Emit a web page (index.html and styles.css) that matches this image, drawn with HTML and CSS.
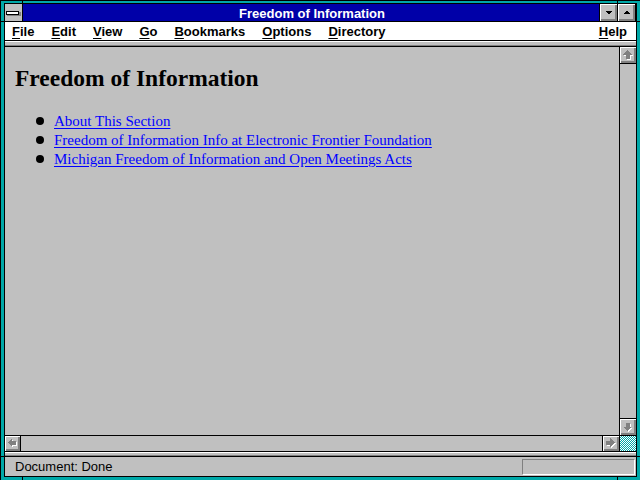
FILE: index.html
```html
<!DOCTYPE html>
<html>
<head>
<meta charset="utf-8">
<title>Freedom of Information</title>
<link rel="stylesheet" href="styles.css">
</head>
<body>
<div class="window">
  <div class="frame">
    <div class="inner">
      <div class="titlebar">
        <div class="sysmenu">
          <svg width="17" height="17" viewBox="0 0 17 17" shape-rendering="crispEdges">
            <rect x="2" y="8" width="14" height="4" fill="#808080"/>
            <rect x="1" y="7" width="13" height="4" fill="#000"/>
            <rect x="2" y="8" width="11" height="2" fill="#fff"/>
          </svg>
        </div>
        <div class="title">Freedom of Information</div>
        <div class="tbtn">
          <svg width="17" height="17" viewBox="0 0 17 17" shape-rendering="crispEdges">
            <polygon points="5,7 12,7 8.5,10.5" fill="#000"/>
          </svg>
        </div>
        <div class="tbtn last">
          <svg width="17" height="17" viewBox="0 0 17 17" shape-rendering="crispEdges">
            <polygon points="5,10 12,10 8.5,6.5" fill="#000"/>
          </svg>
        </div>
      </div>
      <div class="menubar">
        <span class="mi"><u>F</u>ile</span>
        <span class="mi"><u>E</u>dit</span>
        <span class="mi"><u>V</u>iew</span>
        <span class="mi"><u>G</u>o</span>
        <span class="mi"><u>B</u>ookmarks</span>
        <span class="mi"><u>O</u>ptions</span>
        <span class="mi"><u>D</u>irectory</span>
        <span class="spacer"></span>
        <span class="mi help"><u>H</u>elp</span>
      </div>
      <div class="sep"></div>
      <div class="main">
        <div class="view">
          <div class="page">
            <h1 class="heading">Freedom of Information</h1>
            <ul class="links">
              <li><a href="#">About This Section</a></li>
              <li><a href="#">Freedom of Information Info at Electronic Frontier Foundation</a></li>
              <li><a href="#">Michigan Freedom of Information and Open Meetings Acts</a></li>
            </ul>
          </div>
          <div class="vscroll">
            <div class="sbtn vbtn top">
              <svg width="15" height="15" viewBox="0 0 15 15" shape-rendering="crispEdges">
                <g transform="translate(1,1)"><polygon points="7.5,3 12,7.5 9.5,7.5 9.5,11.5 5.5,11.5 5.5,7.5 3,7.5" fill="#fff"/></g>
                <polygon points="7.5,3 12,7.5 9.5,7.5 9.5,11.5 5.5,11.5 5.5,7.5 3,7.5" fill="#808080"/>
              </svg>
            </div>
            <div class="track"></div>
            <div class="sbtn vbtn bottom">
              <svg width="15" height="15" viewBox="0 0 15 15" shape-rendering="crispEdges">
                <g transform="translate(1,1)"><polygon points="7.5,12 12,7.5 9.5,7.5 9.5,3.5 5.5,3.5 5.5,7.5 3,7.5" fill="#fff"/></g>
                <polygon points="7.5,12 12,7.5 9.5,7.5 9.5,3.5 5.5,3.5 5.5,7.5 3,7.5" fill="#808080"/>
              </svg>
            </div>
          </div>
        </div>
        <div class="hscroll">
          <div class="sbtn hbtn left">
            <svg width="14" height="14" viewBox="0 0 14 14" shape-rendering="crispEdges">
              <g transform="translate(1,1)"><polygon points="2.5,6.5 7,2 7,4.5 11,4.5 11,8.5 7,8.5 7,11" fill="#fff"/></g>
              <polygon points="2.5,6.5 7,2 7,4.5 11,4.5 11,8.5 7,8.5 7,11" fill="#808080"/>
            </svg>
          </div>
          <div class="track"></div>
          <div class="sbtn hbtn right">
            <svg width="15" height="14" viewBox="0 0 15 14" shape-rendering="crispEdges">
              <g transform="translate(1,1)"><polygon points="11.5,6.5 7,2 7,4.5 3,4.5 3,8.5 7,8.5 7,11" fill="#fff"/></g>
              <polygon points="11.5,6.5 7,2 7,4.5 3,4.5 3,8.5 7,8.5 7,11" fill="#808080"/>
            </svg>
          </div>
          <div class="corner"></div>
        </div>
      </div>
      <div class="sep2"></div>
      <div class="status">
        <span class="status-text">Document: Done</span>
        <span class="status-box"></span>
      </div>
    </div>
  </div>
  <div class="notch v n-tl"></div>
  <div class="notch v n-tr"></div>
  <div class="notch v n-bl"></div>
  <div class="notch v n-br"></div>
  <div class="notch h n-lt"></div>
  <div class="notch h n-rt"></div>
  <div class="notch h n-lb"></div>
  <div class="notch h n-rb"></div>
</div>
</body>
</html>
```

FILE: styles.css
```css
* { box-sizing: border-box; }
html, body { margin: 0; padding: 0; background: #00a8a8; }
.window {
  position: relative;
  width: 640px;
  height: 480px;
  border-top: 1px solid #000;
  border-left: 1px solid #000;
  overflow: hidden;
}
.frame {
  height: 100%;
  border-style: solid;
  border-color: #00a8a8;
  border-width: 2px 3px 3px 3px;
}
.inner {
  height: 100%;
  border: 1px solid #000;
  background: #c0c0c0;
  display: flex;
  flex-direction: column;
}

/* title bar */
.titlebar {
  height: 18px;
  flex: none;
  display: flex;
  background: #0000a8;
  border-bottom: 1px solid #000;
}
.sysmenu {
  width: 18px;
  height: 17px;
  background: #c0c0c0;
  border-right: 1px solid #000;
}
.sysmenu svg, .tbtn svg { display: block; }
.title {
  flex: 1;
  text-align: center;
  color: #fff;
  font: bold 13px/17px "Liberation Sans", Arial, sans-serif;
  padding: 1px 0 0 2px;
}
.tbtn {
  width: 18px;
  height: 17px;
  background: #c0c0c0;
  border-left: 1px solid #000;
  box-shadow: inset 1px 1px #fff, inset -1px -1px #808080, inset -2px -2px #808080;
}
.tbtn.last {
  width: 19px;
  border-right: 1px solid #000;
}

/* menu */
.menubar {
  height: 19px;
  flex: none;
  display: flex;
  background: #fff;
  border-bottom: 1px solid #000;
  padding: 1px 9px 0 7px;
  font: bold 13px/17px "Liberation Sans", Arial, sans-serif;
  color: #000;
}
.mi { margin-right: 17px; white-space: nowrap; }
.mi u { text-decoration: underline; text-underline-offset: 2px; text-decoration-thickness: 1px; }
.mi.help { margin-right: 0; }
.spacer { flex: 1; }
.sep {
  height: 5px;
  flex: none;
  border-top: 1px solid #fff;
  border-bottom: 1px solid #808080;
}

/* main view */
.main {
  flex: 1;
  display: flex;
  flex-direction: column;
  border-top: 1px solid #000;
  border-bottom: 1px solid #000;
  min-height: 0;
}
.view {
  flex: 1;
  display: flex;
  min-height: 0;
}
.page {
  flex: 1;
  padding: 17px 0 0 10px;
  font-family: "Liberation Serif", "Times New Roman", serif;
  color: #000;
}
.heading {
  margin: 0;
  font-size: 23.5px;
  line-height: 28px;
  font-weight: bold;
}
.links {
  list-style: none;
  margin: 20px 0 0 0;
  padding: 0 0 0 21px;
  font-size: 15px;
  line-height: 19px;
}
.links li {
  display: flex;
  align-items: center;
}
.links li::before {
  content: "";
  width: 8px;
  height: 8px;
  border-radius: 50%;
  background: #000;
  margin: 0 10px 2px 0;
  flex: none;
}
.links a { color: #0000ff; text-decoration: underline; text-underline-offset: 2px; }

.vscroll {
  width: 17px;
  flex: none;
  border-left: 1px solid #000;
  display: flex;
  flex-direction: column;
}
.track { flex: 1; background: #c0c0c0; }
.sbtn {
  background: #c0c0c0;
  box-shadow: inset 1px 1px #fff, inset -1px -1px #808080, inset -2px -2px #808080;
  display: flex;
  flex: none;
}
.sbtn svg { display: block; }
.vbtn { height: 17px; }
.vbtn.top { border-bottom: 1px solid #000; }
.vbtn.bottom { border-top: 1px solid #000; }

.hscroll {
  height: 16px;
  flex: none;
  display: flex;
  border-top: 1px solid #000;
}
.hbtn.left { width: 16px; border-right: 1px solid #000; }
.hbtn.right { width: 17px; border-left: 1px solid #000; }
.corner {
  width: 17px;
  border-left: 1px solid #000;
  background: repeating-conic-gradient(#00a8a8 0 25%, #fff 0 50%) 0 0 / 2px 2px;
}

.sep2 {
  height: 4px;
  flex: none;
  border-top: 1px solid #fff;
  border-bottom: 1px solid #808080;
}
.status {
  height: 20px;
  flex: none;
  border-top: 1px solid #000;
  display: flex;
  align-items: center;
  padding-left: 10px;
  font: 13px/19px "Liberation Sans", Arial, sans-serif;
  color: #000;
}
.status-text { flex: 1; }
.status-box {
  width: 113px;
  height: 16px;
  margin: 2px 1px 1px 0;
  align-self: flex-start;
  border-top: 1px solid #808080;
  border-left: 1px solid #808080;
  border-bottom: 1px solid #fff;
  border-right: 1px solid #fff;
}

/* frame corner notches */
.notch { position: absolute; background: #000; }
.notch.v { width: 1px; height: 4px; }
.notch.h { width: 4px; height: 1px; }
.n-tl { left: 21px; top: -1px; }
.n-tr { left: 616px; top: -1px; }
.n-bl { left: 21px; top: 475px; }
.n-br { left: 616px; top: 475px; }
.n-lt { left: -1px; top: 20px; }
.n-rt { left: 635px; top: 20px; }
.n-lb { left: -1px; top: 455px; }
.n-rb { left: 635px; top: 455px; }
```
